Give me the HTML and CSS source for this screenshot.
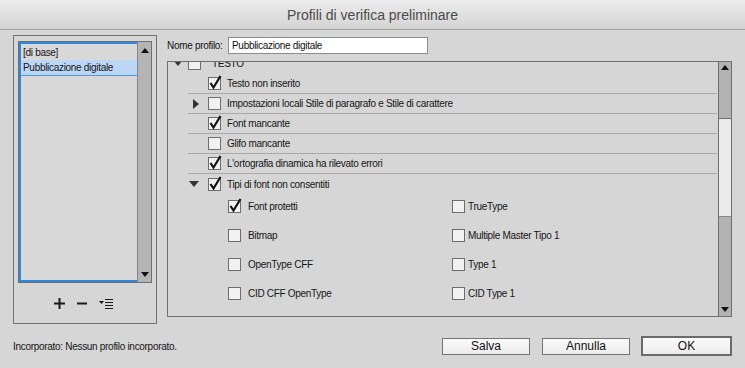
FILE: index.html
```html
<!DOCTYPE html>
<html lang="it">
<head>
    <meta charset="UTF-8">
    <meta name="viewport" content="width=device-width, initial-scale=1.0">
    <title>Profili di verifica preliminare</title>
    <link rel="stylesheet" href="styles.css">
</head>
<body>
    <div id="dialog">
        <div class="titlebar">Profili di verifica preliminare</div>

        <div class="main">
            <div class="group">
                <div class="listbox">
                    <ul class="profile-list">
                        <li>[di base]</li>
                        <li class="selected">Pubblicazione digitale</li>
                    </ul>
                    <div class="vscroll">
                        <span class="arrow up"></span>
                        <span class="arrow down"></span>
                    </div>
                </div>
                <div class="list-tools">
                    <svg width="11" height="11" viewBox="0 0 11 11"><path d="M0 5.5h11M5.5 0v11" stroke="#1a1a1a" stroke-width="2"/></svg>
                    <svg width="10" height="11" viewBox="0 0 10 11"><path d="M0 5.5h10" stroke="#1a1a1a" stroke-width="2"/></svg>
                    <svg width="14" height="11" viewBox="0 0 14 11"><path d="M0 3h5l-2.5 3z" fill="#1a1a1a"/><path d="M6 1.5h8M6 4.5h8M6 7.5h8M6 10.5h8" stroke="#1a1a1a" stroke-width="1"/></svg>
                </div>
            </div>

            <div class="editor">
                <div class="name-row">
                    <label for="profile-name">Nome profilo:</label>
                    <input id="profile-name" type="text" value="Pubblicazione digitale">
                </div>

                <div class="tree">
                    <div class="tree-view">
                        <div class="node root">
                            <span class="twisty down"></span>
                            <span class="cb"></span>
                            <span>TESTO</span>
                        </div>
                        <div class="node item sep">
                            <span class="slot"></span>
                            <span class="cb checked"></span>
                            <span>Testo non inserito</span>
                        </div>
                        <div class="node item sep">
                            <span class="slot"><span class="twisty right"></span></span>
                            <span class="cb"></span>
                            <span>Impostazioni locali Stile di paragrafo e Stile di carattere</span>
                        </div>
                        <div class="node item sep">
                            <span class="slot"></span>
                            <span class="cb checked"></span>
                            <span>Font mancante</span>
                        </div>
                        <div class="node item sep">
                            <span class="slot"></span>
                            <span class="cb"></span>
                            <span>Glifo mancante</span>
                        </div>
                        <div class="node item sep">
                            <span class="slot"></span>
                            <span class="cb checked"></span>
                            <span>L'ortografia dinamica ha rilevato errori</span>
                        </div>
                        <div class="node item">
                            <span class="slot"><span class="twisty down small"></span></span>
                            <span class="cb checked"></span>
                            <span>Tipi di font non consentiti</span>
                        </div>
                        <div class="options">
                            <div class="opt"><span class="cb checked"></span>Font protetti</div>
                            <div class="opt"><span class="cb"></span>TrueType</div>
                            <div class="opt"><span class="cb"></span>Bitmap</div>
                            <div class="opt"><span class="cb"></span>Multiple Master Tipo 1</div>
                            <div class="opt"><span class="cb"></span>OpenType CFF</div>
                            <div class="opt"><span class="cb"></span>Type 1</div>
                            <div class="opt"><span class="cb"></span>CID CFF OpenType</div>
                            <div class="opt"><span class="cb"></span>CID Type 1</div>
                        </div>
                    </div>
                    <div class="tree-scroll">
                        <div class="track top"><span class="arrow up"></span></div>
                        <div class="thumb"></div>
                        <div class="track bottom"><span class="arrow down"></span></div>
                    </div>
                </div>
            </div>
        </div>

        <div class="footer">
            <span class="embedded">Incorporato: Nessun profilo incorporato.</span>
            <div class="buttons">
                <button>Salva</button>
                <button>Annulla</button>
                <button class="default">OK</button>
            </div>
        </div>
    </div>

    <script>
        // disegna il segno di spunta nelle caselle selezionate
        document.querySelectorAll('.cb.checked').forEach(cb => {
            cb.innerHTML = '<svg width="14" height="15" viewBox="0 0 14 15"><path d="M2.5 8l3 4.5L12.5 1" fill="none" stroke="#111" stroke-width="2.2"/></svg>';
        });
    </script>
</body>
</html>
```

FILE: styles.css
```css
body {
    margin: 0;
    font-family: "Liberation Sans", Arial, sans-serif;
    font-size: 10px;
    letter-spacing: -0.3px;
    color: #151515;
    background-color: #d6d6d6;
}
#dialog {
    width: 745px;
    height: 368px;
    overflow: hidden;
}
.titlebar {
    height: 29px;
    line-height: 31px;
    text-align: center;
    font-size: 14px;
    letter-spacing: 0;
    color: #4a4a4a;
    background: linear-gradient(#ececec, #d4d4d4);
    border-bottom: 1px solid #a2a2a2;
}
.main {
    display: flex;
    gap: 10px;
    padding: 5px 13px 0 13px;
}

/* lista profili */
.group {
    width: 134px;
    height: 282px;
    border: 1px solid #727272;
    padding: 5px 4px 0 4px;
    display: flex;
    flex-direction: column;
}
.listbox {
    display: flex;
    height: 240px;
    border: 1px solid #6e6e6e;
    flex-shrink: 0;
}
.profile-list {
    flex: 1;
    margin: 0;
    padding: 1px 0 0 0;
    list-style: none;
    border: 2px solid #2d86e2;
    border-right: none;
    background-color: #d8d8d8;
}
.profile-list li {
    height: 15px;
    line-height: 15px;
    padding-left: 2px;
}
.profile-list li.selected {
    background-color: #bcd7f5;
    border-bottom: 1px solid #4e97e6;
}
.vscroll {
    width: 13px;
    border-left: 1px solid #858585;
    background-color: #b4b4b4;
    display: flex;
    flex-direction: column;
    justify-content: space-between;
    align-items: center;
    padding: 6px 0 5px;
}
.arrow {
    width: 0;
    height: 0;
    border-left: 4px solid transparent;
    border-right: 4px solid transparent;
}
.arrow.up {
    border-bottom: 5px solid #111;
}
.arrow.down {
    border-top: 5px solid #111;
}
.list-tools {
    flex: 1;
    display: flex;
    align-items: center;
    justify-content: center;
    gap: 12px;
    padding-right: 4px;
}

/* editor */
.editor {
    width: 565px;
}
.name-row {
    display: flex;
    align-items: center;
    height: 17px;
    margin-top: 2px;
}
.name-row label {
    width: 61px;
    white-space: nowrap;
}
.name-row input {
    width: 195px;
    height: 15px;
    margin: 0;
    padding: 0 0 0 3px;
    border: 1px solid #8c8c8c;
    background-color: #fff;
    font-family: inherit;
    font-size: 10px;
    letter-spacing: -0.3px;
    color: #111;
    outline: none;
}
.tree {
    display: flex;
    height: 254px;
    margin-top: 7px;
    border: 1px solid #707070;
    overflow: hidden;
}
.tree-view {
    flex: 1;
    overflow: hidden;
}
.node {
    display: flex;
    align-items: center;
    height: 20px;
}
.node.root {
    height: 22px;
    margin-top: -10px;
    padding-left: 5px;
    gap: 5px;
}
.node.item {
    margin-left: 20px;
    margin-right: 1px;
}
.node.sep {
    height: 19px;
    border-bottom: 1px solid #a9a9a9;
}
.slot {
    width: 20px;
    display: flex;
    align-items: center;
}
.cb {
    position: relative;
    width: 11px;
    height: 11px;
    border: 1px solid #6d6d6d;
    background-color: #f1f1f1;
    margin-right: 6px;
    flex-shrink: 0;
}
.cb svg {
    position: absolute;
    left: -1px;
    top: -3px;
}
.twisty {
    width: 0;
    height: 0;
}
.twisty.down {
    border-left: 5px solid transparent;
    border-right: 5px solid transparent;
    border-top: 6px solid #333;
}
.twisty.right {
    margin-left: 5px;
    border-top: 5px solid transparent;
    border-bottom: 5px solid transparent;
    border-left: 6px solid #333;
}
.twisty.small {
    margin-left: 1px;
}
.options {
    display: grid;
    grid-template-columns: 224px 1fr;
    grid-auto-rows: 24px;
    row-gap: 5px;
    margin-left: 60px;
}
.opt {
    display: flex;
    align-items: center;
}
.opt .cb {
    margin-right: 7px;
}
.opt:nth-child(even) .cb {
    margin-right: 3px;
}

/* barra di scorrimento */
.tree-scroll {
    width: 12px;
    border-left: 1px solid #6e6e6e;
    display: flex;
    flex-direction: column;
}
.track {
    background-color: #b2b2b2;
    display: flex;
    justify-content: center;
}
.track.top {
    height: 57px;
    align-items: flex-start;
    padding-top: 3px;
    box-sizing: border-box;
    border-bottom: 1px solid #6e6e6e;
}
.thumb {
    height: 97px;
    background-color: #ebebeb;
}
.track.bottom {
    flex: 1;
    align-items: flex-end;
    padding-bottom: 4px;
    border-top: 1px solid #8a8a8a;
}

/* footer */
.footer {
    display: flex;
    align-items: center;
    height: 44px;
    padding: 0 13px;
}
.embedded {
    flex: 1;
    padding-top: 1px;
}
.buttons {
    display: flex;
    align-items: center;
    gap: 12px;
}
button {
    width: 88px;
    height: 17px;
    padding: 0;
    border: 1px solid #747474;
    border-radius: 0;
    background: linear-gradient(#fafafa, #ececec);
    font-family: "Liberation Sans", Arial, sans-serif;
    font-size: 12px;
    line-height: 15px;
    color: #111;
}
button.default {
    width: 91px;
    height: 20px;
    border: 2px solid #6a6a6a;
    margin-left: -1px;
}
```
